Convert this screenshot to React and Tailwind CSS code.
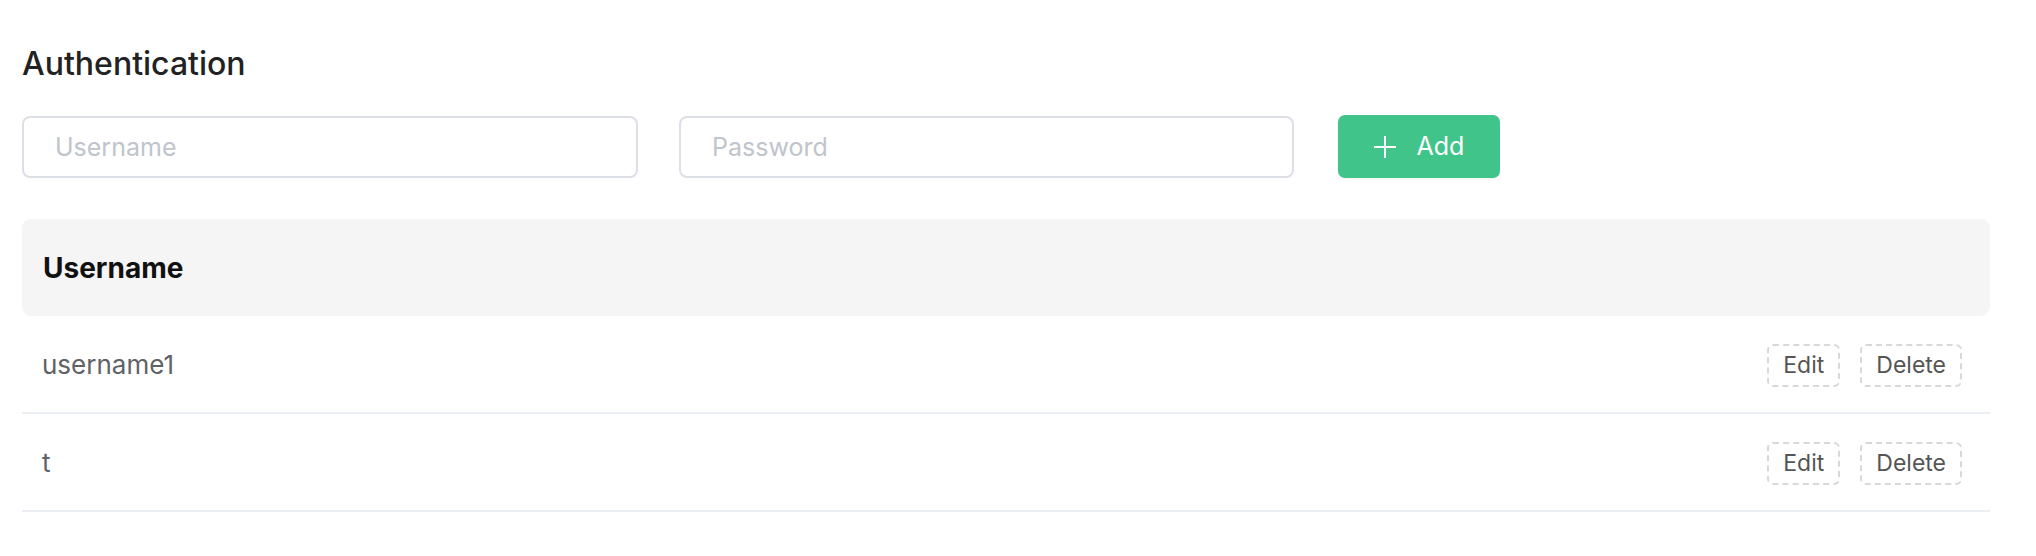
import React from 'react';

const users = [{ name: 'username1' }, { name: 't' }];

function PlusIcon() {
  return (
    <svg width="22" height="22" viewBox="0 0 22 22" fill="none" stroke="currentColor" strokeWidth="2">
      <line x1="11" y1="0" x2="11" y2="22" />
      <line x1="0" y1="11" x2="22" y2="11" />
    </svg>
  );
}

function RowButton({ label }) {
  return (
    <button className="h-[43px] px-[14px] rounded-[6px] border-2 border-dashed border-[#d6d8dc] text-[23px] text-[#555] leading-none">
      {label}
    </button>
  );
}

export default function App() {
  return (
    <div
      className="min-h-screen bg-white pl-[22px] pt-[40px]"
      style={{ fontFamily: 'Inter, "Noto Sans", "Liberation Sans", sans-serif' }}
    >
      <h1 className="text-[32px] leading-[48px] font-medium text-[#222]">Authentication</h1>

      <div className="mt-[27px] flex items-center">
        <input
          placeholder="Username"
          className="w-[616px] h-[62px] rounded-[8px] border-2 border-[#dcdfe6] px-[31px] text-[25px] text-[#333] placeholder:text-[#c0c4cc] outline-none"
        />
        <input
          placeholder="Password"
          className="ml-[41px] w-[615px] h-[62px] rounded-[8px] border-2 border-[#dcdfe6] px-[31px] text-[25px] text-[#333] placeholder:text-[#c0c4cc] outline-none"
        />
        <button className="ml-[44px] w-[162px] h-[63px] rounded-[7px] bg-[#40c48a] text-white flex items-center justify-center gap-[21px] text-[25px] shadow-[0_2px_3px_rgba(0,0,0,0.04)]">
          <PlusIcon />
          <span>Add</span>
        </button>
      </div>

      <div className="mt-[41px] w-[1968px]">
        <div className="h-[97px] rounded-[9px] bg-[#f5f5f5] flex items-center px-[21px]">
          <span className="text-[28px] font-bold text-[#111]">Username</span>
        </div>
        {users.map((u) => (
          <div key={u.name} className="h-[98px] border-b-2 border-[#ebeef5] flex items-center justify-between pl-[20px] pr-[28px]">
            <span className="text-[26px] text-[#606266]">{u.name}</span>
            <div className="flex gap-[20px] pt-[2px]">
              <RowButton label="Edit" />
              <RowButton label="Delete" />
            </div>
          </div>
        ))}
      </div>
    </div>
  );
}
